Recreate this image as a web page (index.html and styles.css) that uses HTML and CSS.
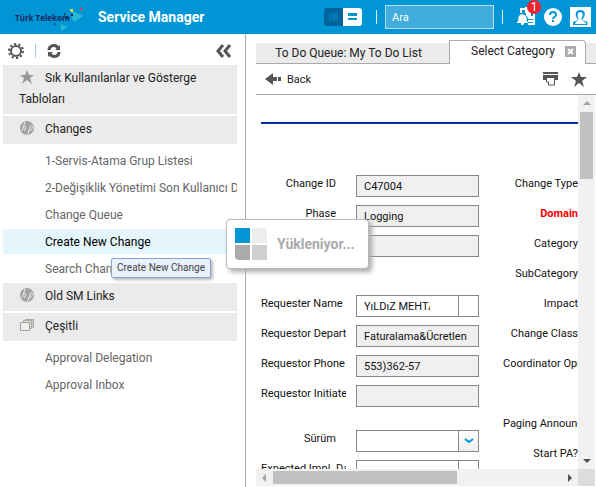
FILE: index.html
```html
<!DOCTYPE html>
<html lang="tr">
<head>
<meta charset="utf-8">
<title>Service Manager</title>
<link rel="stylesheet" href="styles.css">
</head>
<body>
<header class="topbar">
  <div class="logo">
    <span class="logo-text">Türk Telekom</span>
    <svg class="logo-mark" width="30" height="24" viewBox="0 0 30 24" aria-hidden="true">
      <path d="M20 4l10 5-9 6-2-4z" fill="#2cb9cf"/><path d="M8 17l6 3-6 4z" fill="#2cb9cf"/>
      <path d="M27 0l3 2-3 2z" fill="#d8405a"/><path d="M17 2h3v3h-2V4h-1z" fill="#d8e04a"/>
      <path d="M11 6l2 1-2 2zM18 7h2v2h-2zM13 10h2v2h-2zM1 16l2 1-2 1z" fill="#14295e"/>
    </svg>
  </div>
  <h1 class="brand">Service Manager</h1>
  <div class="tools">
    <div class="toggle">
      <button class="toggle-btn dark" aria-label="Sidebar view"><svg width="10" height="8" viewBox="0 0 10 8"><path d="M0 0h2v8H0zM3 0h6v8H3z" fill="#0078b4"/></svg></button>
      <button class="toggle-btn light" aria-label="List view"><svg width="10" height="8" viewBox="0 0 10 8"><path d="M0 0h9v3H0zM0 5h9v2H0z" fill="#0096d6"/></svg></button>
    </div>
    <span class="rule"></span>
    <input class="search" type="text" placeholder="Ara" aria-label="Ara">
    <span class="rule"></span>
    <button class="icon-btn alerts" aria-label="Notifications">
      <svg width="19" height="20" viewBox="0 0 19 20"><path d="M3 1h5v2H5v3H3zM8 0h6v9H9V6H8zM10 9h8v9h-7v-2h5v-1h-5v-2h5v-1h-5zM16 4h2v6h-2z" fill="#fff"/><path d="M0 15c2-1 1-4 2-6 1-1 1-1 3-2 2 1 3 1 4 2 1 2 0 5 2 6v1H7c0 3-3 3-3 0H0z" fill="#fff"/></svg>
      <span class="badge">1</span>
    </button>
    <button class="icon-btn" aria-label="Help"><svg width="18" height="18" viewBox="0 0 18 18"><circle cx="9" cy="9" r="9" fill="#fff"/><path d="M6 7c0-4 6-4 6 0 0 2-3 2-3 4" fill="none" stroke="#0096d6" stroke-width="2"/><path d="M8 12h2v2H8z" fill="#0096d6"/></svg></button>
    <button class="icon-btn" aria-label="Profile"><svg width="21" height="20" viewBox="0 0 21 20"><path d="M0 0h21v20H0z" fill="#fff"/><path d="M10.500 3c6 0 5 7 2 9v1l5 2v3H3v-3l5-2v-1C5 10 4 3 10.500 3z" fill="#0096d6"/><path d="M10 5c4 0 3 5 1 7l5 4v1H5v-1l4-4C7 10 7 5 10 5z" fill="#fff"/></svg></button>
  </div>
</header>
<div class="workspace">
  <nav class="sidebar">
    <div class="side-tools">
      <button class="icon-btn" aria-label="Settings"><svg width="16" height="16" viewBox="0 0 16 16" fill="none" stroke="#555"><circle cx="8" cy="8" r="5" stroke-width="2"/><circle cx="8" cy="8" r="7" stroke-width="2" stroke-dasharray="2.200 2.200"/></svg></button>
      <span class="rule pale"></span>
      <button class="icon-btn" aria-label="Refresh"><svg width="14" height="14" viewBox="0 0 14 14"><path d="M2 6c0-5 7-6 9-2M12 8c0 5-7 6-9 2" fill="none" stroke="#555" stroke-width="3"/><path d="M13 1v5H8zM1 13V8h5z" fill="#555"/></svg></button>
      <button class="icon-btn collapse" aria-label="Collapse"><svg width="16" height="14" viewBox="0 0 16 14"><path d="M7 1L2 7l5 6M14 1L9 7l5 6" fill="none" stroke="#555" stroke-width="3"/></svg></button>
    </div>
    <button class="group"><svg class="group-icon" width="14" height="14" viewBox="0 0 14 14"><path d="M7 0l2 5h5l-4 3 2 6-5-4-5 4 2-6-4-3h5z" fill="#999"/></svg>Sık Kullanılanlar ve Gösterge Tabloları</button>
    <button class="group"><svg class="group-icon" width="14" height="14" viewBox="0 0 14 14"><circle cx="7" cy="7" r="7" fill="#a3a3a3"/><path d="M5 1L2 10M3.500 6c3-2 2 0 1 4M7.500 14l3-9c3-1 2 1 1 4-1 1-2 1-3 1" fill="none" stroke="#ebebeb"/></svg>Changes</button>
    <ul class="links">
      <li><a href="#">1-Servis-Atama Grup Listesi</a></li>
      <li><a href="#">2-Değişiklik Yönetimi Son Kullanıcı Değişiklikleri</a></li>
      <li><a href="#">Change Queue</a></li>
      <li><a href="#" class="current">Create New Change</a></li>
      <li><a href="#">Search Changes</a><span class="tooltip" role="tooltip">Create New Change</span></li>
    </ul>
    <button class="group"><svg class="group-icon" width="14" height="14" viewBox="0 0 14 14"><circle cx="7" cy="7" r="7" fill="#a3a3a3"/><path d="M5 1L2 10M3.500 6c3-2 2 0 1 4M7.500 14l3-9c3-1 2 1 1 4-1 1-2 1-3 1" fill="none" stroke="#ebebeb"/></svg>Old SM Links</button>
    <button class="group"><svg class="group-icon" width="14" height="14" viewBox="0 0 14 14"><path d="M5.500 1.500h8v8h-8z" fill="#ccc" stroke="#aaa"/><path d="M3.500 2.500h8v8h-8z" fill="#ddd" stroke="#aaa"/><path d="M.5 4.500h9v8h-9z" fill="#edf2ee" stroke="#a59f93"/></svg>Çeşitli</button>
    <ul class="links">
      <li><a href="#">Approval Delegation</a></li>
      <li><a href="#">Approval Inbox</a></li>
    </ul>
  </nav>
  <main class="pane">
    <div class="tabs">
      <button class="tab">To Do Queue: My To Do List</button>
      <div class="tab active"><span>Select Category</span><button class="close" aria-label="Close tab"><svg width="11" height="11" viewBox="0 0 11 11"><path d="M0 0h11v11H0z" fill="#aaa"/><path d="M3 3l5 5M8 3L3 8" stroke="#fff" stroke-width="2"/></svg></button></div>
      <div class="tab-rest"></div>
    </div>
    <div class="actions">
      <button class="back"><svg width="16" height="12" viewBox="0 0 16 12"><path d="M0 6l8-6v4h4v4H8v4zM13 4h3v4h-3z" fill="#555"/></svg>Back</button>
      <button class="icon-btn print" aria-label="Print"><svg width="15" height="14" viewBox="0 0 15 14"><path d="M0 0h15v2H0zM0 3h15v5h-3V6H3v2H0z" fill="#555"/><path d="M3.500 6v4h2v3h6V6" fill="#fff" stroke="#555"/></svg></button>
      <button class="icon-btn" aria-label="Favorite"><svg width="16" height="15" viewBox="0 0 16 15"><path d="M8 0l2 5h6l-5 4 2 6-5-4-5 4 2-6-5-4h6z" fill="#555"/></svg></button>
    </div>
    <div class="viewport">
      <form class="form">
        <div class="columns">
          <div class="fields">
            <div class="row"><label class="inset" for="cid">Change ID</label><input id="cid" class="box" value="C47004" readonly></div>
            <div class="row"><label class="inset" for="phase">Phase</label><input id="phase" class="box" value="Logging" readonly></div>
            <div class="row"><input class="box lone" aria-label="Status" readonly></div>
            <div class="row"></div>
            <div class="row"><label for="rname">Requester Name</label><div class="combo"><input id="rname" class="combo-text" value="YıLDıZ MEHTAP"><button type="button" class="combo-btn" aria-label="Find"></button></div></div>
            <div class="row"><label for="rdep">Requestor Department</label><input id="rdep" class="box" value="Faturalama&amp;Ücretlen" readonly></div>
            <div class="row"><label for="rphone">Requestor Phone</label><input id="rphone" class="box" value="553)362-57" readonly></div>
            <div class="row"><label for="rinit">Requestor Initiated</label><input id="rinit" class="box" readonly></div>
            <div class="row spaced"><label class="inset" for="surum">Sürüm</label><div class="combo"><select id="surum" class="combo-select"><option></option></select><span class="combo-btn shade"><svg width="10" height="6" viewBox="0 0 10 6"><path d="M1 1l4 3 4-3" fill="none" stroke="#0096d6" stroke-width="2"/></svg></span></div></div>
            <div class="row"><label for="impl">Expected Impl. Date</label><div class="combo"><input id="impl" class="combo-text"><button type="button" class="combo-btn" aria-label="Pick date"></button></div></div>
          </div>
          <div class="captions">
            <span>Change Type</span>
            <span class="required">Domain</span>
            <span>Category</span>
            <span>SubCategory</span>
            <span>Impact</span>
            <span>Change Class</span>
            <span class="long">Coordinator Opinion</span>
            <span></span>
            <span class="long">Paging Announcement</span>
            <span>Start PA?</span>
          </div>
        </div>
      </form>
      <div class="vbar"><i class="up"></i><div class="vthumb"></div><i class="down"></i></div>
      <div class="hbar"><i class="left"></i><div class="hthumb"></div><i class="right"></i></div>
      <div class="corner"></div>
    </div>
  </main>
</div>
<div class="loading" role="status">
  <svg width="32" height="32" viewBox="0 0 32 32"><path d="M0 0h15v15H0z" fill="#0096d6"/><path d="M17 0h11q4 0 4 4v11H17z" fill="#eee"/><path d="M0 17h15v15H4q-4 0-4-4z" fill="#aaa"/><path d="M17 17h15v15H17z" fill="#d0d0d0"/></svg>
  <span>Yükleniyor...</span>
</div>
</body>
</html>
```
FILE: styles.css
```css
* { box-sizing: border-box; }
body {
  margin: 0;
  height: 100vh;
  display: flex;
  flex-direction: column;
  overflow: hidden;
  background: #fff;
  color: #222;
  font-family: Roboto, "Liberation Sans", sans-serif;
  font-size: 11px;
}
button, input, select { font: inherit; color: inherit; }
button { border: 0; padding: 0; background: none; }
svg { display: block; flex: none; }
.icon-btn { display: flex; flex: none; position: relative; }

.topbar {
  flex: none;
  height: 34px;
  display: flex;
  align-items: center;
  padding: 0 5px 0 15px;
  background: #0096d6;
  color: #fff;
}
.logo { position: relative; width: 83px; }
.logo-text { font: bold 8px "Open Sans", sans-serif; color: #14295e; }
.logo-mark { position: absolute; left: 38px; top: -4px; }
.brand { margin: 0; font-size: 14px; font-weight: bold; white-space: nowrap; }
.tools { margin-left: auto; display: flex; align-items: center; gap: 8px; }
.toggle { display: flex; margin-right: 6px; }
.toggle-btn { width: 19px; height: 18px; display: flex; align-items: center; justify-content: center; }
.toggle-btn.dark { background: #00639b; border-radius: 3px 0 0 3px; }
.toggle-btn.light { background: #fff; border-radius: 0 3px 3px 0; }
.rule { width: 1px; height: 14px; background: #d9effa; flex: none; }
.rule.pale { background: #a3cdf0; }
.search {
  width: 109px;
  height: 24px;
  padding: 0 6px;
  border: 1px solid #b8e1f5;
  background: #42acdd;
  color: #fff;
}
.search::placeholder { color: #fff; opacity: 1; }
.alerts { margin-left: 6px; }
.badge {
  position: absolute;
  left: 10px;
  top: -7px;
  width: 14px;
  height: 14px;
  border-radius: 7px;
  background: #f5222d;
  color: #fff;
  font-size: 12px;
  line-height: 14px;
  text-align: center;
}

.workspace { flex: 1; min-height: 0; display: flex; }
.sidebar {
  flex: none;
  width: 246px;
  padding: 0 8px 0 3px;
  border-right: 1px solid #aaa;
  font-size: 12px;
}
.side-tools { height: 31px; display: flex; align-items: center; gap: 11px; padding: 3px 5px 0; }
.collapse { margin-left: auto; }
.group {
  display: block;
  width: 100%;
  margin-bottom: 2px;
  padding: 3px 16px 4px;
  background: #ebebeb;
  text-align: left;
  line-height: 21px;
}
.group-icon { display: inline-block; margin: 0 11px 0 1px; vertical-align: -2px; }
.links {
  list-style: none;
  margin: 4px 0 2px;
  padding: 0;
  display: grid;
  grid-template-columns: minmax(0, 1fr);
  gap: 2px;
}
.links li { position: relative; }
.links a {
  display: block;
  height: 25px;
  padding-left: 42px;
  line-height: 26px;
  white-space: nowrap;
  overflow: hidden;
  color: #666;
  text-decoration: none;
}
.links .current { background: #e5f5fc; color: #000; }
.tooltip {
  position: absolute;
  left: 108px;
  top: 2px;
  z-index: 2;
  width: 100px;
  height: 20px;
  border: 1px solid #84a5d1;
  border-radius: 2px;
  background: #e8f1fd;
  box-shadow: 2px 2px 3px #bbb;
  color: #444;
  font-size: 10px;
  line-height: 18px;
  text-align: center;
  white-space: nowrap;
}

.pane { flex: 1; min-width: 0; display: flex; flex-direction: column; padding: 6px 0 1px 10px; }
.tabs { height: 24px; flex: none; display: flex; align-items: flex-end; font-size: 12px; }
.tab { flex: none; width: 193px; height: 21px; padding-right: 8px; border-bottom: 1px solid #aaa; background: #ebebeb; white-space: nowrap; }
.tab.active {
  width: 137px;
  height: 24px;
  display: flex;
  align-items: center;
  justify-content: space-between;
  padding: 0 9px 3px 21px;
  border: 1px solid #aaa;
  border-bottom: 0;
  border-radius: 0 4px 0 0;
  background: #fff;
}
.tab-rest { flex: 1; height: 21px; background: #ebebeb; border-bottom: 1px solid #aaa; }
.actions { flex: none; height: 31px; display: flex; align-items: center; gap: 13px; padding-right: 9px; border-bottom: 1px solid #aaa; }
.back { display: flex; align-items: center; gap: 6px; padding-left: 9px; }
.print { margin-left: auto; }

.viewport {
  flex: 1;
  min-height: 0;
  margin-right: 1px;
  display: grid;
  grid-template-columns: 1fr 17px;
  grid-template-rows: 1fr 17px;
}
.form { min-width: 0; min-height: 0; overflow: hidden; padding: 27px 0 0 5px; color: #111; }
.columns { display: flex; justify-content: space-between; border-top: 2px solid #003399; padding-top: 51px; }
.fields { flex: none; }
.row { display: flex; gap: 10px; height: 30px; }
.spaced { margin-top: 15px; }
.row label { width: 85px; line-height: 17px; white-space: nowrap; overflow: hidden; }
.row .inset { padding-right: 10px; text-align: right; }
.box, .combo { width: 123px; height: 22px; border: 1px solid #888; }
.box { padding: 0 7px; background: #f0f0f0; }
.lone { margin-left: auto; }
.combo { display: flex; position: relative; background: #fff; }
.combo-text { flex: 1; min-width: 0; margin: 0 48px 0 0; padding: 0 0 0 7px; border: 0; background: none; }
.combo-text + .combo-btn { position: absolute; right: 0; }
.combo-select { width: 100%; border: 0; appearance: none; background: none; }
.combo-btn {
  position: absolute;
  right: 0;
  width: 20px;
  height: 20px;
  border-left: 1px solid #888;
  display: flex;
  align-items: center;
  justify-content: center;
  pointer-events: none;
}
.shade { background: linear-gradient(#fff, #eee); }
.captions { width: 75px; display: flex; flex-direction: column; }
.captions span { height: 30px; line-height: 17px; text-align: right; white-space: nowrap; overflow: hidden; }
.captions .long { text-align: left; }
.captions .required { color: #f00; font-weight: bold; }

.vbar, .hbar { display: flex; align-items: center; justify-content: space-between; background: #f1f1f1; }
.vbar { flex-direction: column; padding: 6px 0; }
.hbar { padding: 0 6px; }
.vthumb { width: 13px; height: 67px; margin: 7px 0 auto; background: #c1c1c1; }
.hthumb { width: 184px; height: 13px; margin: 0 auto 0 7px; background: #c1c1c1; }
.corner { background: #dcdcdc; }
.vbar i, .hbar i { width: 0; height: 0; border: 4px solid transparent; }
.vbar .up { border-top: 0; border-bottom-color: #a3a3a3; }
.vbar .down { border-bottom: 0; border-top-color: #505050; }
.hbar .left { border-left: 0; border-right-color: #a3a3a3; }
.hbar .right { border-right: 0; border-left-color: #505050; }

.loading {
  position: absolute;
  left: 226px;
  top: 219px;
  z-index: 3;
  width: 143px;
  height: 50px;
  display: flex;
  align-items: center;
  gap: 10px;
  padding-left: 8px;
  border: 1px solid #bbb;
  border-radius: 4px;
  background: #fff;
  box-shadow: 3px 3px 5px #aaa;
  color: #aaa;
  font-size: 14px;
  font-weight: bold;
}
```
